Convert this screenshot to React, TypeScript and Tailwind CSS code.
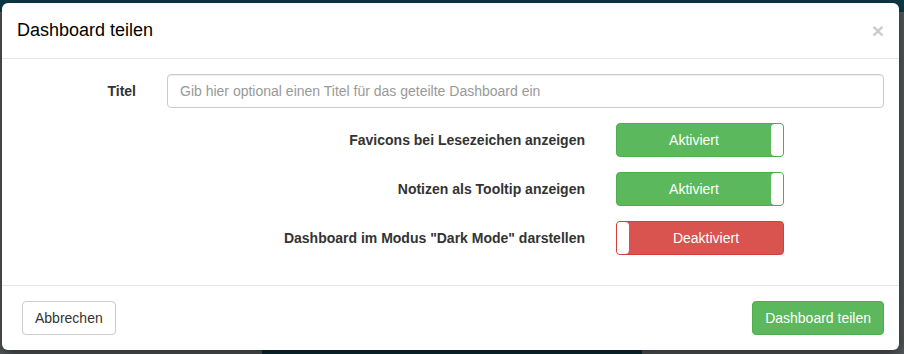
import { useState } from "react";

type ToggleProps = { on: boolean; onChange: () => void };

function Toggle({ on, onChange }: ToggleProps) {
  // bootstrap-toggle look: coloured body, white handle on the far side
  return (
    <button
      type="button"
      onClick={onChange}
      className={`flex h-[34px] w-[168px] overflow-hidden rounded-[4px] border text-[14px] text-white ${
        on ? "flex-row border-[#4cae4c] bg-[#5cb85c]" : "flex-row-reverse border-[#d43f3a] bg-[#d9534f]"
      }`}
    >
      <span className="flex flex-1 items-center justify-center">{on ? "Aktiviert" : "Deaktiviert"}</span>
      <span className={`h-full w-[12px] bg-white ${on ? "rounded-l-[4px]" : "rounded-r-[4px]"}`} />
    </button>
  );
}

export default function App() {
  const [favicons, setFavicons] = useState(true);
  const [tooltip, setTooltip] = useState(true);
  const [dark, setDark] = useState(false);

  const rows = [
    { label: "Favicons bei Lesezeichen anzeigen", on: favicons, set: () => setFavicons((v) => !v) },
    { label: "Notizen als Tooltip anzeigen", on: tooltip, set: () => setTooltip((v) => !v) },
    { label: 'Dashboard im Modus "Dark Mode" darstellen', on: dark, set: () => setDark((v) => !v) },
  ];

  return (
    <div
      className="relative h-[354px] w-[904px] overflow-hidden bg-[#55595b]"
      style={{ fontFamily: '"Liberation Sans", Arial, sans-serif' }}
    >
      {/* dimmed page behind the backdrop */}
      <div className="h-[12px] bg-[#0c3946]" />
      <div className="mx-[262px] mt-[330px] h-[12px] bg-[#0b2d37]" />

      <div className="absolute left-[2px] top-[3px] flex w-[897px] flex-col rounded-[6px] bg-white text-[14px] text-[#333] shadow-[0_5px_15px_rgba(0,0,0,0.5)]">
        <div className="flex items-center justify-between border-b border-[#e5e5e5] p-[15px]">
          <h4 className="text-[18px] leading-[25px] text-black">Dashboard teilen</h4>
          <button type="button" className="text-[21px] font-bold leading-none text-black opacity-20">
            ×
          </button>
        </div>

        <div className="flex flex-col gap-[15px] p-[15px]">
          <div className="flex items-center gap-[31px]">
            <label className="w-[119px] text-right font-bold">Titel</label>
            <input
              className="h-[34px] flex-1 rounded-[4px] border border-[#ccc] px-[12px] text-[14px] text-[#555] shadow-[inset_0_1px_1px_rgba(0,0,0,0.075)] outline-none placeholder:text-[#999]"
              placeholder="Gib hier optional einen Titel für das geteilte Dashboard ein"
            />
          </div>
          {rows.map((r) => (
            <div key={r.label} className="flex items-center gap-[31px]">
              <label className="w-[568px] text-right font-bold">{r.label}</label>
              <Toggle on={r.on} onChange={r.set} />
            </div>
          ))}
          <div />
        </div>

        <div className="flex items-center justify-between border-t border-[#e5e5e5] py-[15px] pl-[20px] pr-[15px]">
          <button type="button" className="h-[34px] rounded-[4px] border border-[#ccc] bg-white px-[12px] text-[14px] text-[#333]">
            Abbrechen
          </button>
          <button type="button" className="h-[34px] rounded-[4px] border border-[#4cae4c] bg-[#5cb85c] px-[12px] text-[14px] text-white">
            Dashboard teilen
          </button>
        </div>
      </div>
    </div>
  );
}
